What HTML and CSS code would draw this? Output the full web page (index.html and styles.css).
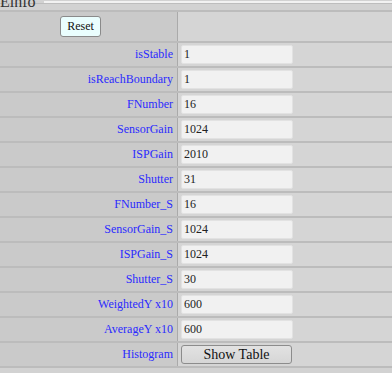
FILE: index.html
```html
<!DOCTYPE html>
<html lang="en">
<head>
  <meta charset="UTF-8" />
  <title>Einfo</title>
  <link rel="stylesheet" href="styles.css">
</head>
<body>
  <fieldset class="einfo">
    <legend>Einfo</legend>
    <table class="info-table">
      <tr class="reset-row">
        <td class="label"><button class="reset-btn">Reset</button></td>
        <td class="value"></td>
      </tr>
      <tr><td class="label">isStable</td><td class="value"><input type="text" value="1"></td></tr>
      <tr><td class="label">isReachBoundary</td><td class="value"><input type="text" value="1"></td></tr>
      <tr><td class="label">FNumber</td><td class="value"><input type="text" value="16"></td></tr>
      <tr><td class="label">SensorGain</td><td class="value"><input type="text" value="1024"></td></tr>
      <tr><td class="label">ISPGain</td><td class="value"><input type="text" value="2010"></td></tr>
      <tr><td class="label">Shutter</td><td class="value"><input type="text" value="31"></td></tr>
      <tr><td class="label">FNumber_S</td><td class="value"><input type="text" value="16"></td></tr>
      <tr><td class="label">SensorGain_S</td><td class="value"><input type="text" value="1024"></td></tr>
      <tr><td class="label">ISPGain_S</td><td class="value"><input type="text" value="1024"></td></tr>
      <tr><td class="label">Shutter_S</td><td class="value"><input type="text" value="30"></td></tr>
      <tr><td class="label">WeightedY x10</td><td class="value"><input type="text" value="600"></td></tr>
      <tr><td class="label">AverageY x10</td><td class="value"><input type="text" value="600"></td></tr>
      <tr><td class="label">Histogram</td><td class="value"><button class="show-btn">Show Table</button></td></tr>
    </table>
  </fieldset>
</body>
</html>
```

FILE: styles.css
```css
body {
  margin: 0;
  background: #d2d2d2;
  font-family: "Liberation Serif", "Times New Roman", serif;
  font-size: 12px;
  overflow: hidden;
}

.einfo {
  margin: -4px 0 0 0;
  padding: 0;
  border: none;
  border-top: 2px solid #f2f2f2;
  box-shadow: 0 1px 0 #bdbdbd inset;
  position: relative;
}

.einfo legend {
  padding: 0 8px 0 0;
  margin-left: 0;
  font-size: 16px;
  color: #333;
  line-height: 12px;
}

.info-table {
  width: 100%;
  border-collapse: collapse;
  margin-top: 2px;
  border-top: 2px solid #bcbcbc;
}

.info-table td {
  height: 23px;
  padding: 0;
  border-bottom: 2px solid #bcbcbc;
}

.info-table .label {
  width: 173px;
  padding-right: 4px;
  text-align: right;
  color: #2b2bff;
  background: #cacaca;
  border-right: 1px solid #aaa;
}

.info-table .value {
  background: #d5d5d5;
  padding-left: 3px;
}

.reset-row td {
  height: 29px;
}

.reset-row .label {
  text-align: center;
  padding-right: 16px;
  width: 161px;
}

.info-table input {
  width: 106px;
  height: 15px;
  padding: 1px 2px;
  border: 1px solid #e2e2e2;
  border-radius: 2px;
  background: #f1f1f1;
  font-family: inherit;
  font-size: 12px;
  color: #222;
  display: block;
}

.reset-btn {
  font-family: inherit;
  font-size: 12px;
  padding: 2px 6px;
  height: 21px;
  background: #eafefe;
  border: 1px solid #8a8a8a;
  border-radius: 3px;
  color: #111;
}

.show-btn {
  display: block;
  width: 111px;
  height: 19px;
  font-family: inherit;
  font-size: 14px;
  background: linear-gradient(#e2e2e2, #d6d6d6);
  border: 1px solid #8c8c8c;
  border-radius: 3px;
  color: #111;
  padding: 0;
}
```
